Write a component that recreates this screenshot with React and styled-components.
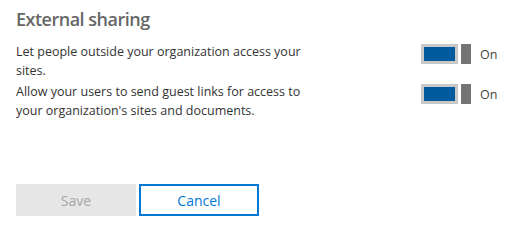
import React, { useState } from "react";
import styled, { createGlobalStyle } from "styled-components";

const GlobalStyle = createGlobalStyle`
  body {
    margin: 0;
    background: #fff;
    font-family: "Open Sans", "Noto Sans", sans-serif;
  }
`;

const settings = [
  {
    id: "outside",
    text: "Let people outside your organization access your sites.",
  },
  {
    id: "guest",
    text: "Allow your users to send guest links for access to your organization's sites and documents.",
  },
];

const App = () => {
  const [values, setValues] = useState({ outside: true, guest: true });

  return (
    <Page>
      <GlobalStyle />
      <Title>External sharing</Title>
      <List>
        {settings.map(s => (
          <Row key={s.id}>
            <Label>{s.text}</Label>
            <ToggleWrap
              onClick={() => setValues({ ...values, [s.id]: !values[s.id] })}
            >
              <Track on={values[s.id] ? 1 : 0} />
              <Knob />
              <State>{values[s.id] ? "On" : "Off"}</State>
            </ToggleWrap>
          </Row>
        ))}
      </List>
      <Actions>
        <Button disabled>Save</Button>
        <Button primary>Cancel</Button>
      </Actions>
    </Page>
  );
};

const Page = styled.div`
  width: 522px;
  height: 245px;
  padding: 6px 16px 0;
  box-sizing: border-box;
`;

const Title = styled.h2`
  margin: 0;
  font-size: 18px;
  font-weight: 600;
  color: #666;
  line-height: 26px;
  letter-spacing: -0.5px;
`;

const List = styled.div`
  margin-top: 10px;
  display: flex;
  flex-direction: column;
  gap: 2px;
`;

const Row = styled.div`
  display: flex;
  justify-content: space-between;
  align-items: flex-start;
`;

const Label = styled.p`
  margin: 0;
  width: 300px;
  font-size: 12.5px;
  line-height: 19px;
  color: #333;
`;

const ToggleWrap = styled.div`
  display: flex;
  align-items: center;
  width: 85px;
  margin-top: 2px;
  cursor: pointer;
`;

const Track = styled.div`
  width: 37px;
  height: 20px;
  box-sizing: border-box;
  border: 3px solid #c8c8c8;
  background: ${p => (p.on ? "#005a9e" : "#fff")};
`;

const Knob = styled.div`
  width: 10px;
  height: 20px;
  margin-left: 3px;
  background: #737373;
`;

const State = styled.span`
  margin-left: 9px;
  font-size: 12.5px;
  color: #444;
`;

const Actions = styled.div`
  display: flex;
  gap: 3px;
  margin-top: 64px;
`;

const Button = styled.button`
  width: 120px;
  height: 32px;
  font-family: inherit;
  font-size: 14px;
  box-sizing: border-box;
  border: 2px solid ${p => (p.primary ? "#0078d4" : "#e6e6e6")};
  background: ${p => (p.primary ? "#fff" : "#e6e6e6")};
  color: ${p => (p.primary ? "#0078d4" : "#a6a6a6")};
  cursor: ${p => (p.disabled ? "default" : "pointer")};
`;

export default App;
